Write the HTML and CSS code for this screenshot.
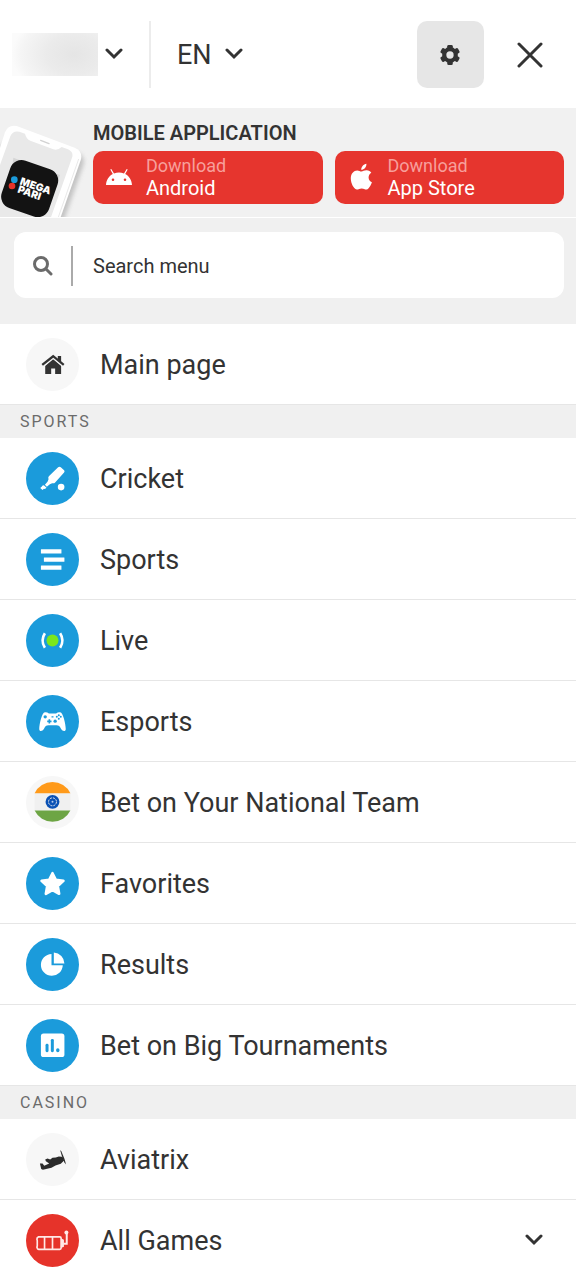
FILE: index.html
```html
<!DOCTYPE html>
<html lang="en">
<head>
<meta charset="utf-8">
<meta name="viewport" content="width=device-width, initial-scale=1">
<title>Menu</title>
<link rel="stylesheet" href="styles.css">
</head>
<body>
<header class="topbar">
  <button class="picker account" type="button" aria-label="Account">
    <span class="account-name"></span>
    <svg class="chevron" viewBox="0 0 18 12"><path d="M2 2l7 7 7-7"/></svg>
  </button>
  <button class="picker language" type="button"><span class="language-code">EN</span>
    <svg class="chevron" viewBox="0 0 18 12"><path d="M2 2l7 7 7-7"/></svg>
  </button>
  <button class="settings" type="button" aria-label="Settings">
    <svg viewBox="0 0 24 24"><circle cx="12" cy="12" r="8.600"/><g><rect x="9" y="1" width="6" height="22" rx="1.500"/><rect x="9" y="1" width="6" height="22" rx="1.500" transform="rotate(60 12 12)"/><rect x="9" y="1" width="6" height="22" rx="1.500" transform="rotate(120 12 12)"/></g><circle cx="12" cy="12" r="4" fill="#e6e6e6"/></svg>
  </button>
  <button class="close" type="button" aria-label="Close">
    <svg viewBox="0 0 26 26"><path d="M2 2l22 22M24 2L2 24"/></svg>
  </button>
</header>

<section class="promo">
  <svg class="phone" viewBox="0 9 270 327">
    <defs><filter id="soft" x="-20%" y="-20%" width="150%" height="150%"><feGaussianBlur stdDeviation="7"/></filter></defs>
    <path d="M0 120L225 140Q258 150 250 180L192 345H0z" fill="#aaa" opacity=".65" filter="url(#soft)"/>
    <path d="M-20 190L15 82Q24 58 50 63L224 128Q250 139 242 166L179 345H-20z" fill="#fff"/>
    <path d="M236 162L172 345" stroke="#dedede" stroke-width="2" fill="none"/>
    <path d="M-20 235L31 94Q38 76 58 80L75 86Q79 102 91 107L160 133Q173 137 185 126L204 133Q222 142 216 158L150 345H-20z" fill="#e9e9e9"/>
    <path d="M122 106L147 116" stroke="#d2d2d2" stroke-width="4" stroke-linecap="round"/>
    <path d="M40 158L180 210L168 245L35 200z" fill="#d5d5d5"/>
    <rect x="14" y="176" width="150" height="150" rx="36" fill="#131313" transform="rotate(19 89 251)"/>
    <circle cx="43" cy="224" r="10" fill="#1b9bdb"/>
    <circle cx="36" cy="243" r="10" fill="#e6332a"/>
    <g transform="translate(58 238) rotate(19)">
      <text class="logo-text" x="0" y="0">MEGA</text>
      <text class="logo-text" x="1" y="25">PARI</text>
    </g>
  </svg>
  <div class="promo-body">
    <h2 class="promo-title">MOBILE APPLICATION</h2>
    <div class="stores">
      <a class="store" href="#android">
        <svg viewBox="0 0 26 26"><path fill-rule="evenodd" fill="#fff" d="M0 21C.4 15.800 3 12 6.800 10L4.300 5.600l1-.6L8 9.500a14 14 0 0 1 10 0L20.700 5l1 .6L19.200 10C23 12 25.600 15.800 26 21zM7 14.500a1.300 1.300 0 1 0 0 2.600 1.300 1.300 0 0 0 0-2.600zm12 0a1.300 1.300 0 1 0 0 2.600 1.300 1.300 0 0 0 0-2.600z"/></svg>
        <span class="store-text"><span class="store-hint">Download</span><span>Android</span></span>
      </a>
      <a class="store" href="#ios">
        <svg viewBox="0 0 26 26"><path fill="#fff" d="M13.400 7.500c1.500-.1 3-1.400 5.200-1.300 2.200.1 3.800 1 4.700 2.500-4 2.500-3.300 7.900.6 9.500-.8 2.300-2.800 6.700-5.200 7.300-1.800.3-2.700-1.100-5-1.100s-3.200 1.200-5 1.100C5.300 24.500 3 19 2.800 15 2.600 9.300 6 6.400 9.200 6.400c1.800 0 3 1.100 4.200 1.100zM13.200 5.800C13.200 2.700 15.600.1 18.400-.3c.3 3-2.200 6.100-5.200 6.100z"/></svg>
        <span class="store-text"><span class="store-hint">Download</span><span>App Store</span></span>
      </a>
    </div>
  </div>
</section>

<div class="search-area">
  <label class="search">
    <svg viewBox="0 0 20 20"><circle cx="8" cy="8" r="6.500"/><path d="M13 13l5 5"/></svg>
    <input type="text" placeholder="Search menu" aria-label="Search menu">
  </label>
</div>

<nav>
  <ul class="menu">
    <li><a class="item" href="#main">
      <svg class="icon" viewBox="0 0 160 160"><circle class="pale" cx="80" cy="80" r="80"/><g fill="#333"><path d="M96 54h10v24l-10-8z"/><path d="M82 63l24 20v26H88V92H76v17H58V83z"/></g><path d="M52 85L82 60l30 25" fill="none" stroke="#f7f7f7" stroke-width="6"/><path d="M49 81L82 55l32 26" fill="none" stroke="#333" stroke-width="7"/></svg>
      <span class="label">Main page</span></a></li>
  </ul>

  <h3 class="group">SPORTS</h3>
  <ul class="menu">
    <li><a class="item" href="#cricket">
      <svg class="icon" viewBox="0 0 160 160"><circle class="blue" cx="80" cy="80" r="80"/><g fill="#fff"><path d="M97 46q4-3 8 0l10 9q3 3 0 7L88 92q-4 4-9 2l-7 3-9 8-6-6 8-9 3-8q-2-6 1-9z"/><path d="M54 100l8 8-5 4-3-1-4 4-7-6 5-5 1-2z"/><circle cx="106" cy="106" r="10"/></g></svg>
      <span class="label">Cricket</span></a></li>
    <li><a class="item" href="#sports">
      <svg class="icon" viewBox="0 0 160 160"><circle class="blue" cx="80" cy="80" r="80"/><g fill="#fff"><rect x="45" y="49" width="62" height="13" rx="1"/><rect x="54" y="74" width="62" height="13" rx="1"/><rect x="45" y="98" width="62" height="13" rx="1"/></g></svg>
      <span class="label">Sports</span></a></li>
    <li><a class="item" href="#live">
      <svg class="icon" viewBox="0 0 160 160"><circle class="blue" cx="80" cy="80" r="80"/><circle cx="80" cy="80" r="18" fill="#7be71c"/><path d="M57 58Q43 80 57 102M103 58Q117 80 103 102" fill="none" stroke="#fff" stroke-width="8"/></svg>
      <span class="label">Live</span></a></li>
    <li><a class="item" href="#esports">
      <svg class="icon" viewBox="0 0 160 160"><circle class="blue" cx="80" cy="80" r="80"/><path fill="#fff" d="M57 52q7-1 12 4h22q5-5 12-4c9 1 17 36 17 51 0 9-10 7-14 0-4-9-7-12-14-12H68c-7 0-10 3-14 12-4 7-14 9-14 0 0-15 8-50 17-51z"/><g fill="#1b9bdb"><circle cx="58" cy="66" r="5"/><circle cx="88" cy="79" r="5"/><path d="M68 73h5v4h4v5h-4v4h-5v-4h-4v-5h4zM77 64h6v4h-6z"/><circle cx="99" cy="61" r="3"/><circle cx="99" cy="72" r="3"/><circle cx="93" cy="66" r="3"/><circle cx="105" cy="66" r="3"/></g></svg>
      <span class="label">Esports</span></a></li>
    <li><a class="item" href="#national">
      <svg class="icon" viewBox="0 0 160 160"><circle class="pale" cx="80" cy="80" r="80"/><path d="M26 52h108v52H26z" fill="#f0f0f0"/><path d="M26 52a60 60 0 0 1 108 0z" fill="#ff9a1a"/><path d="M26 104a60 60 0 0 0 108 0z" fill="#6da544"/><circle cx="80" cy="78" r="21" fill="#0a51b5"/><circle cx="80" cy="78" r="12" fill="none" stroke="#eee" stroke-width="3" stroke-dasharray="6 3.400"/><circle cx="80" cy="78" r="3" fill="#b9cdee"/></svg>
      <span class="label">Bet on Your National Team</span></a></li>
    <li><a class="item" href="#favorites">
      <svg class="icon" viewBox="0 0 160 160"><circle class="blue" cx="80" cy="80" r="80"/><path d="M80 49l10 20 23 3-17 16 4 23-20-11-20 11 4-23-17-16 23-3z" fill="#fff" stroke="#fff" stroke-width="8" stroke-linejoin="round"/></svg>
      <span class="label">Favorites</span></a></li>
    <li><a class="item" href="#results">
      <svg class="icon" viewBox="0 0 160 160"><circle class="blue" cx="80" cy="80" r="80"/><path d="M77 48v34h34a33 33 0 1 1-34-34zM84 44a33 33 0 0 1 32 33H84z" fill="#fff"/></svg>
      <span class="label">Results</span></a></li>
    <li><a class="item" href="#tournaments">
      <svg class="icon" viewBox="0 0 160 160"><circle class="blue" cx="80" cy="80" r="80"/><rect x="45" y="44" width="71" height="71" rx="8" fill="#fff"/><g fill="#1b9bdb"><rect x="59" y="75" width="9" height="25" rx="4"/><rect x="75" y="60" width="9" height="40" rx="4"/><rect x="91" y="88" width="10" height="12" rx="5"/></g></svg>
      <span class="label">Bet on Big Tournaments</span></a></li>
  </ul>

  <h3 class="group">CASINO</h3>
  <ul class="menu">
    <li><a class="item" href="#aviatrix">
      <svg class="icon" viewBox="0 0 160 160"><circle class="pale" cx="80" cy="80" r="80"/><path d="M113 75l2 8-10 10-16 5-12 7-26 6-5-2-4-17 8 0 5 7 15-7-10-7-2-5 7-3 8 3 7-5 10-1 9-3 9 1z" fill="#2b2b2b"/><path d="M103 51l4 5 9 22 5 17-5-6-8-20z" fill="#2b2b2b"/></svg>
      <span class="label">Aviatrix</span></a></li>
    <li><button class="item" type="button" aria-expanded="false">
      <svg class="icon" viewBox="0 0 160 160"><circle cx="80" cy="80" r="80" fill="#e6332a"/><g fill="none" stroke="#ffe9e7" stroke-width="5"><path d="M38 69h64q4 0 4 4v30q0 4-4 4H38q-4 0-4-4l-1-3 1-4V80l-1-4 1-4zM56 69v38M80 69v38"/><path d="M106 76l6 3v18l-6 3" fill="#ffe9e7"/><path d="M113 90h10V57" stroke-width="6"/></g><circle cx="122" cy="56" r="6" fill="#ffe9e7"/></svg>
      <span class="label">All Games</span>
      <svg class="chevron end" viewBox="0 0 18 12"><path d="M2 2l7 7 7-7"/></svg>
    </button></li>
  </ul>
</nav>
</body>
</html>
```
FILE: styles.css
```css
* { box-sizing: border-box; }

body {
  margin: 0;
  background: #fff;
  color: #333;
  font-family: Roboto, "Liberation Sans", sans-serif;
  font-size: 27px;
}

button {
  margin: 0;
  padding: 0;
  border: 0;
  background: none;
  color: inherit;
  font: inherit;
  cursor: pointer;
}

a { color: inherit; text-decoration: none; }
svg { display: block; flex: none; }
h2, h3, ul { margin: 0; padding: 0; font-weight: 400; }
ul { list-style: none; }

.topbar {
  display: flex;
  align-items: center;
  height: 108px;
  padding: 0 33px 0 12px;
}

.picker {
  display: flex;
  align-items: center;
  height: 67px;
}

.account {
  gap: 7px;
  padding-right: 26px;
  border-right: 2px solid #ececec;
}

.account-name {
  width: 86px;
  height: 43px;
  background: radial-gradient(ellipse 62px 44px at 72% 50%, #e5e5e5 0%, #ebebeb 45%, #f5f5f5 85%, #fbfbfb 100%);
}

.language {
  gap: 13px;
  padding-left: 26px;
}

.language-code, .label { padding-top: 2px; }

.chevron { width: 18px; height: 12px; }

.chevron path, .close path {
  fill: none;
  stroke: #333;
  stroke-width: 3;
  stroke-linecap: round;
}

.settings {
  display: grid;
  place-items: center;
  width: 67px;
  height: 67px;
  margin-left: auto;
  padding: 2px 2px 0 0;
  border-radius: 10px;
  background: #e6e6e6;
}

.settings svg { width: 22px; height: 22px; fill: #333; }
.close { margin-left: 33px; padding-top: 2px; }
.close svg { width: 26px; height: 26px; }

.promo {
  display: flex;
  gap: 3px;
  padding-right: 12px;
  border-bottom: 1px solid #fff;
  background: #f1f1f1;
}

.phone { width: 90px; height: 109px; }

.logo-text {
  fill: #fff;
  font-family: Inter, "Liberation Sans", sans-serif;
  font-size: 31px;
  font-weight: 900;
}

.promo-body { flex: 1; padding-top: 13px; }

.promo-title {
  margin-bottom: 6px;
  font-size: 20px;
  font-weight: 600;
  line-height: 24px;
}

.stores {
  display: grid;
  grid-template-columns: 1fr 1fr;
  gap: 12px;
}

.store {
  display: flex;
  align-items: center;
  gap: 14px;
  height: 53px;
  padding: 0 0 2px 13px;
  border-radius: 10px;
  background: #e6352e;
  color: #fff;
  font-size: 20px;
  line-height: 22px;
}

.store svg { width: 26px; height: 26px; overflow: visible; }
.store-text { display: flex; flex-direction: column; }
.store-hint { color: #f79f9b; font-size: 18px; }

.search-area {
  padding: 14px 12px 26px 14px;
  background: #f0f0f0;
}

.search {
  display: flex;
  align-items: center;
  gap: 18px;
  height: 66px;
  padding: 2px 19px 0;
  border-radius: 12px;
  background: #fff;
}

.search svg {
  width: 20px;
  height: 20px;
  fill: none;
  stroke: #6b6b6b;
  stroke-width: 3;
  stroke-linecap: round;
}

.search input {
  flex: 1;
  min-width: 0;
  height: 40px;
  padding: 0 0 0 20px;
  border: 0;
  border-left: 2px solid #aaa;
  outline: 0;
  background: none;
  color: #333;
  font: inherit;
  font-size: 20px;
}

.search input::placeholder { color: #333; opacity: 1; }

.group {
  padding-left: 20px;
  background: #f0f0f0;
  color: #6b6b6b;
  font-size: 16px;
  line-height: 33px;
  letter-spacing: 2px;
}

.menu li { border-bottom: 1px solid #e6e6e6; }
.menu:last-child li:last-child { border-bottom: 0; }

.item {
  display: flex;
  align-items: center;
  gap: 21px;
  width: 100%;
  height: 80px;
  padding: 0 33px 0 26px;
  text-align: left;
}

.icon { width: 53px; height: 53px; }
.pale { fill: #f7f7f7; }
.blue { fill: #1b9bdb; }
.end { margin-left: auto; }
```
